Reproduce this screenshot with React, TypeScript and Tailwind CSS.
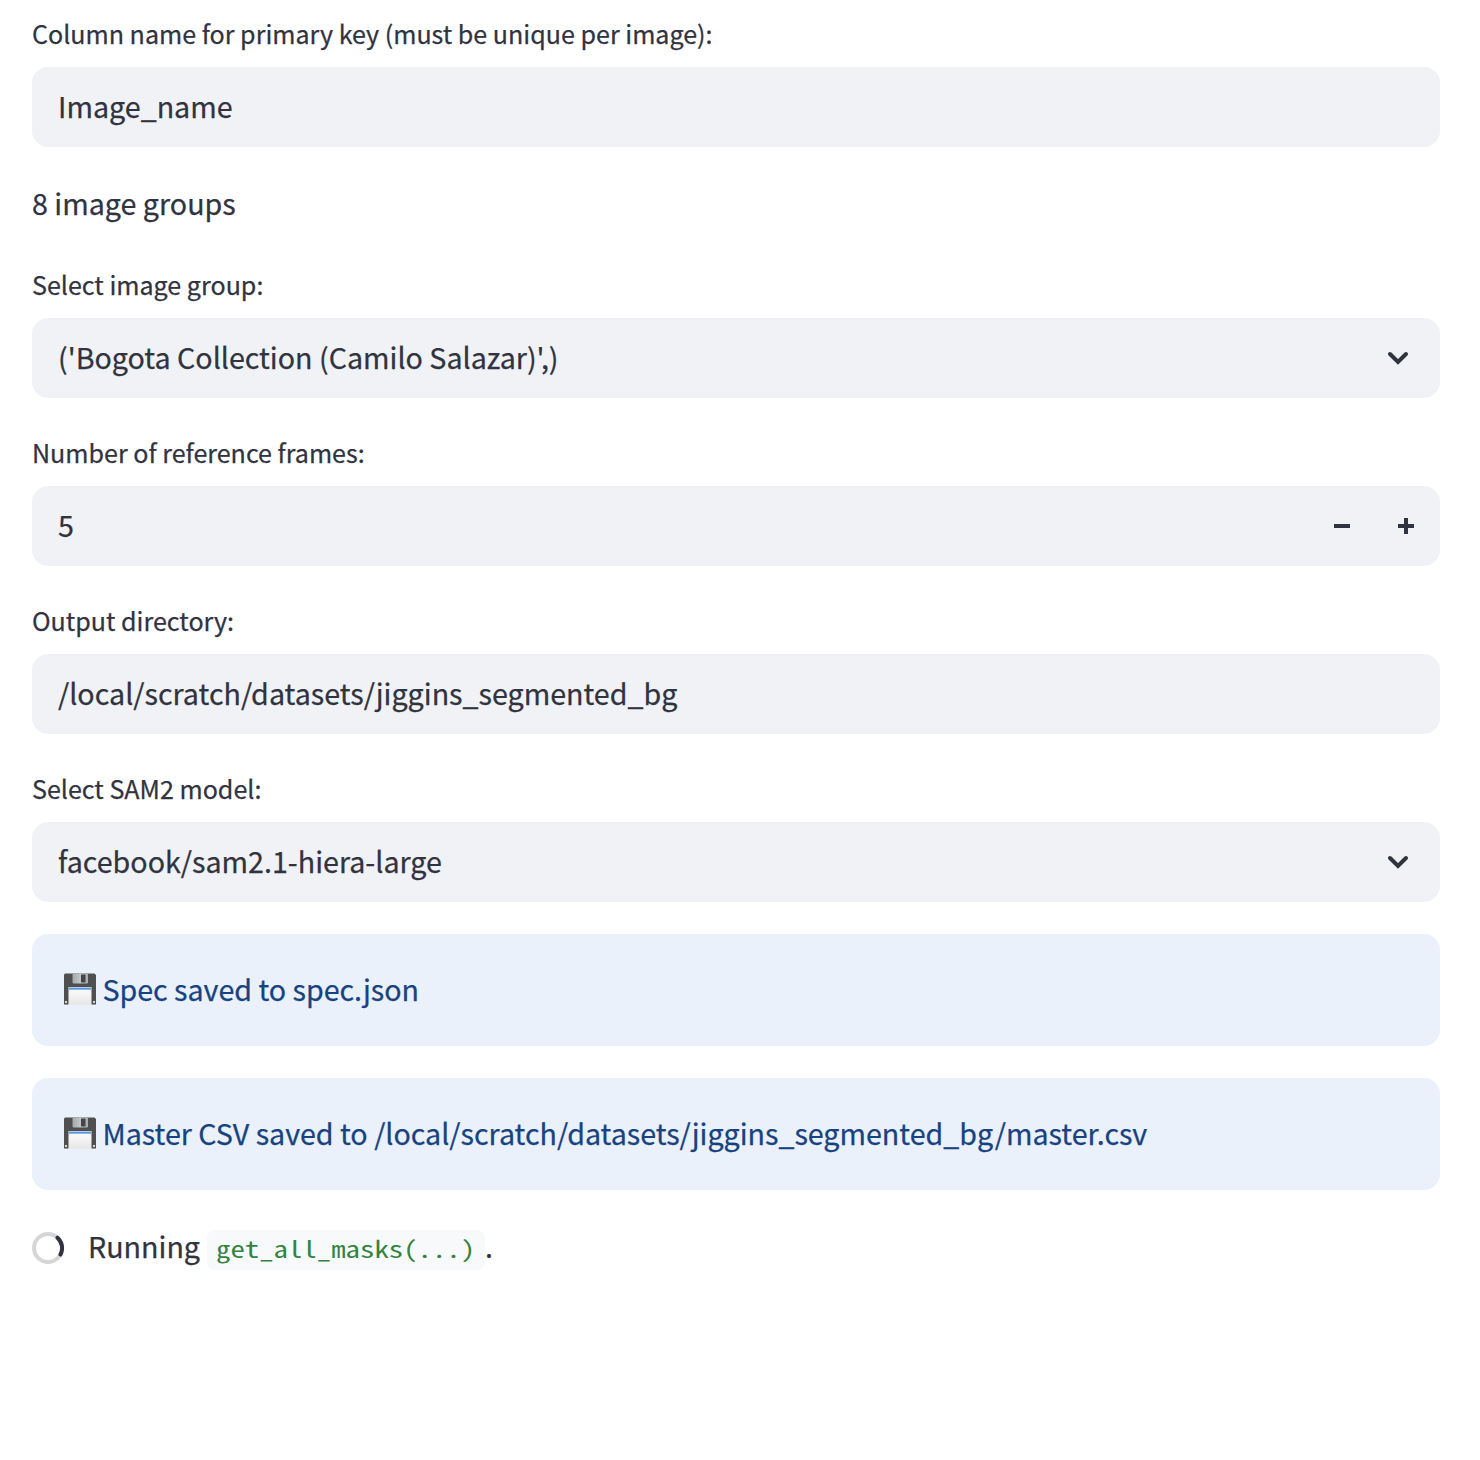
import type { ReactNode } from "react";

function Label({ children }: { children: ReactNode }) {
  return (
    <div className="mb-2 flex h-12 items-center whitespace-nowrap pb-[3px] text-[25.07px] leading-none">
      <span>{children}</span>
    </div>
  );
}

function Field({ label, value, children }: { label: string; value: string; children?: ReactNode }) {
  return (
    <div>
      <Label>{label}</Label>
      <div className="flex h-20 items-center justify-between rounded-2xl bg-[#f0f2f6] pl-[26px]">
        <span className="whitespace-nowrap pb-[2px] text-[28.65px] leading-none">{value}</span>
        {children}
      </div>
    </div>
  );
}

function Chevron() {
  return (
    <svg className="mr-[30px] h-6 w-6" viewBox="0 0 24 24" fill="none">
      <path d="M4 8l8 8 8-8" stroke="#31333f" strokeWidth="4" strokeLinecap="round" strokeLinejoin="miter" />
    </svg>
  );
}

function Floppy() {
  return (
    <svg className="mr-[6.4px] mb-[2px] h-8 w-8 shrink-0" viewBox="0 0 32 32">
      <defs>
        <linearGradient id="metal" x1="0" x2="1" y1="0" y2="0">
          <stop offset="0" stopColor="#a5a8a9" />
          <stop offset="0.5" stopColor="#c3c6c7" />
          <stop offset="1" stopColor="#a9acad" />
        </linearGradient>
        <linearGradient id="paper" x1="0" x2="0" y1="0" y2="1">
          <stop offset="0" stopColor="#ffffff" />
          <stop offset="1" stopColor="#e6e6e6" />
        </linearGradient>
      </defs>
      <path d="M1 0.500h29.500L32 2V31.500H0V1.500z" fill="#4f4f4f" />
      <path d="M8.500 0.500h15.500v9q0 1-1 1H9.500q-1 0-1-1z" fill="url(#metal)" />
      <rect x="17" y="1.500" width="4.500" height="8" rx="0.600" fill="#444646" />
      <rect x="4.500" y="14" width="23" height="18" fill="url(#paper)" />
      <rect x="5" y="14.500" width="22" height="2.200" fill="#5b98dd" />
      <rect x="1" y="28" width="2" height="2" fill="#d8d8d8" />
      <rect x="29" y="28" width="2" height="2" fill="#d8d8d8" />
    </svg>
  );
}

function Info({ children }: { children: ReactNode }) {
  return (
    <div className="flex h-28 items-center rounded-2xl bg-[#eaf1fb] px-8 text-[28.64px] leading-none text-[#184380]">
      <Floppy />
      <span className="whitespace-nowrap pb-[2px]">{children}</span>
    </div>
  );
}

export default function App() {
  return (
    <main className="flex min-h-[1460px] w-[1480px] flex-col gap-8 bg-white pl-8 pr-10 pt-[11px] font-['Noto_Sans_CJK_SC',sans-serif] text-[#31333f] [-webkit-text-stroke:0.25px_currentColor]">
      <Field label="Column name for primary key (must be unique per image):" value="Image_name" />
      <div className="flex h-[51px] items-center pb-[2px] text-[28.65px] leading-none">
        <span>8 image groups</span>
      </div>
      <Field label="Select image group:" value="('Bogota Collection (Camilo Salazar)',)">
        <Chevron />
      </Field>
      <Field label="Number of reference frames:" value="5">
        <div className="mr-[26px] flex gap-12">
          <svg className="h-4 w-4" viewBox="0 0 16 16" fill="#31333f">
            <path d="M0 6h16v4H0z" />
          </svg>
          <svg className="h-4 w-4" viewBox="0 0 16 16" fill="#31333f">
            <path d="M6 0h4v6h6v4h-6v6H6v-6H0V6h6z" />
          </svg>
        </div>
      </Field>
      <Field label="Output directory:" value="/local/scratch/datasets/jiggins_segmented_bg" />
      <Field label="Select SAM2 model:" value="facebook/sam2.1-hiera-large">
        <Chevron />
      </Field>
      <Info>Spec saved to spec.json</Info>
      <Info>Master CSV saved to /local/scratch/datasets/jiggins_segmented_bg/master.csv</Info>
      <div className="flex h-[52px] items-center text-[28.65px] leading-none">
        <svg className="mr-6 h-8 w-8" viewBox="0 0 32 32" fill="none" strokeWidth="4">
          <circle cx="16" cy="16" r="14" stroke="#d6d6d9" />
          <path d="M25.500 5.700A14 14 0 0 1 28.500 22.500" stroke="#31333f" strokeLinecap="round" />
        </svg>
        <span className="pb-1">Running</span>
        <code className="mt-1 ml-[7px] flex h-10 w-[278px] items-center rounded-lg bg-[#f8f9fb] pb-1 pl-[9px] font-['Noto_Sans_Mono_CJK_SC','Liberation_Mono',monospace] text-[23px] leading-none text-[#348340] [-webkit-text-stroke:0px]">
          <span className="origin-left scale-x-[1.252]">get_all_masks(...)</span>
        </code>
        <span className="pb-1">.</span>
      </div>
    </main>
  );
}
